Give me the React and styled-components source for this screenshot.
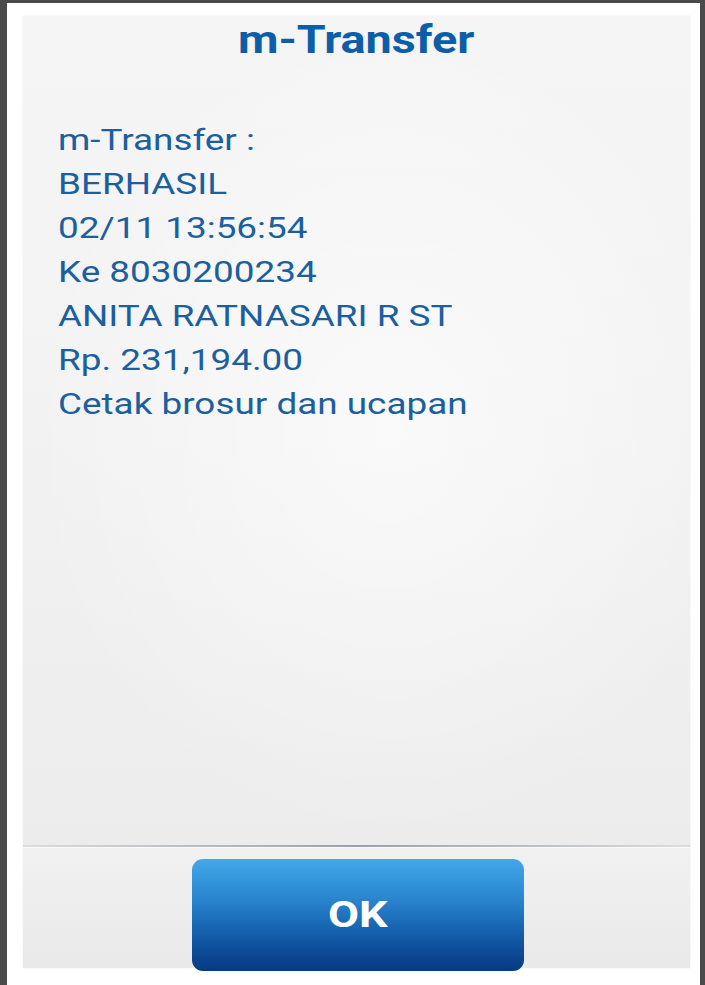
import React from "react";
import styled, { createGlobalStyle } from "styled-components";

const GlobalStyle = createGlobalStyle`
    html, body {
        margin: 0;
        padding: 0;
        height: 100%;
    }

    body {
        font-family: Roboto, "Liberation Sans", sans-serif;
        background: #4b4b4b;
    }

    #root {
        height: 100%;
    }
`;

const Backdrop = styled.div`
    height: 985px;
    box-sizing: border-box;
    padding: 3px 5px 0 7px;
    background: #4b4b4b;
`;

const Dialog = styled.div`
    height: 100%;
    box-sizing: border-box;
    background: #ffffff;
    padding: 13px 10px 17px 16px;
    display: flex;
    flex-direction: column;
`;

const Panel = styled.div`
    flex: 1;
    display: flex;
    flex-direction: column;
    background: #ececec;
    box-shadow: 0 0 2px rgba(0, 0, 0, 0.08);
`;

const Content = styled.div`
    flex: 1;
    background:
        radial-gradient(ellipse at 55% 50%, rgba(255, 255, 255, 0.6) 0%, rgba(255, 255, 255, 0) 70%),
        linear-gradient(180deg, #f5f5f5 0%, #f3f3f3 40%, #ececec 100%);
`;

const Title = styled.h1`
    margin: 0;
    padding: 2px 0 0 0;
    text-align: center;
    font-size: 38px;
    font-weight: 700;
    color: #0d5ea8;
    line-height: 44px;
`;

const Stretch = styled.span`
    display: inline-block;
    transform: scaleX(${(p) => p.$x});
    transform-origin: ${(p) => p.$origin || "left"} center;
    white-space: nowrap;
`;

const Message = styled.div`
    margin-top: 56px;
    padding-left: 35px;
    font-size: 29.5px;
    line-height: 44px;
    color: #1c5f9e;
`;

const Line = styled.div``;

const Divider = styled.div`
    height: 2px;
    background: linear-gradient(90deg, #dcdcdc 0%, #9aa1a8 50%, #dcdcdc 100%);
    border-bottom: 1px solid #fafafa;
`;

const Footer = styled.div`
    height: 120px;
    display: flex;
    justify-content: center;
    padding: 11px 0 0 0;
    box-sizing: border-box;
    background: linear-gradient(180deg, #f1f1f1 0%, #e9e9e9 100%);
`;

const OkButton = styled.button`
    width: 332px;
    height: 112px;
    margin-left: 2px;
    border: none;
    border-radius: 11px;
    background: linear-gradient(180deg, #42a8e8 0%, #2a86cf 35%, #125aa7 70%, #073a82 100%);
    color: #ffffff;
    font-family: Roboto, "Liberation Sans", sans-serif;
    font-size: 36px;
    font-weight: 700;
    cursor: pointer;
`;

const lines = [
    "m-Transfer :",
    "BERHASIL",
    "02/11 13:56:54",
    "Ke 8030200234",
    "ANITA RATNASARI R ST",
    "Rp. 231,194.00",
    "Cetak brosur dan ucapan",
];

const App = () => (
    <>
        <GlobalStyle />
        <Backdrop>
            <Dialog>
                <Panel>
                    <Content>
                        <Title>
                            <Stretch $x={1.23} $origin="center">m-Transfer</Stretch>
                        </Title>
                        <Message>
                            {lines.map((text) => (
                                <Line key={text}>
                                    <Stretch $x={1.25}>{text}</Stretch>
                                </Line>
                            ))}
                        </Message>
                    </Content>
                    <Divider />
                    <Footer>
                        <OkButton>
                            <Stretch $x={1.25} $origin="center">OK</Stretch>
                        </OkButton>
                    </Footer>
                </Panel>
            </Dialog>
        </Backdrop>
    </>
);

export default App;
